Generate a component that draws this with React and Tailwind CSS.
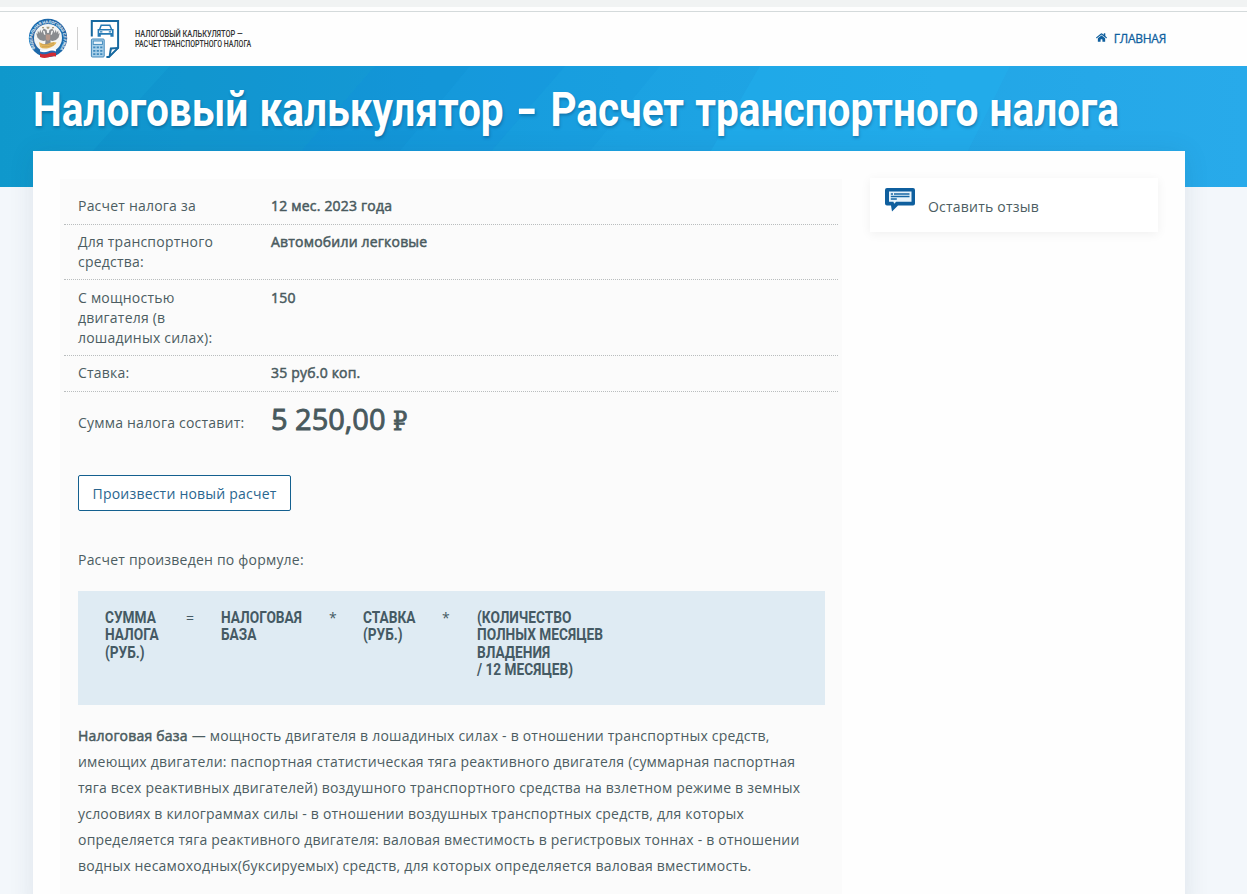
import { FaHome } from 'react-icons/fa';

const rows = [
  { label: ['Расчет налога за'], value: '12 мес. 2023 года', box: 'h-[46px] pt-[17px]' },
  { label: ['Для транспортного', 'средства:'], value: 'Автомобили легковые', box: 'h-[55px] pt-[7px]' },
  { label: ['С мощностью', 'двигателя (в', 'лошадиных силах):'], value: '150', box: 'h-[76px] pt-[8px]' },
  { label: ['Ставка:'], value: '35 руб.0 коп.', box: 'h-[36px] pt-[7px]' },
];

const formula = [
  { lines: ['СУММА', 'НАЛОГА', '(РУБ.)'], box: 'w-[81px]' },
  { sign: '=', box: 'w-[35px]' },
  { lines: ['НАЛОГОВАЯ', 'БАЗА'], box: 'w-[108px]' },
  { sign: '*', box: 'w-[34px]' },
  { lines: ['СТАВКА', '(РУБ.)'], box: 'w-[79px]' },
  { sign: '*', box: 'w-[35px]' },
  { lines: ['(КОЛИЧЕСТВО', 'ПОЛНЫХ МЕСЯЦЕВ', 'ВЛАДЕНИЯ', '/ 12 МЕСЯЦЕВ)'], box: 'w-[140px]' },
];

const about = [
  'имеющих двигатели: паспортная статистическая тяга реактивного двигателя (суммарная паспортная',
  'тяга всех реактивных двигателей) воздушного транспортного средства на взлетном режиме в земных',
  'услоовиях в килограммах силы - в отношении воздушных транспортных средств, для которых',
  'определяется тяга реактивного двигателя: валовая вместимость в регистровых тоннах - в отношении',
  'водных несамоходных(буксируемых) средств, для которых определяется валовая вместимость.',
];

function Emblem() {
  return (
    <svg className="h-10 w-10" viewBox="0 0 40 40">
      <defs>
        <path id="ring" d="M7.6 30.4 A15.6 15.6 0 1 1 32.4 30.4" />
      </defs>
      <circle cx="20" cy="20" r="19.2" fill="#1d68a9" />
      <circle cx="20" cy="20" r="14" fill="#f4f4f2" />
      <text fill="#e6eff7" fontSize="4.1" fontWeight="700" fontFamily="Roboto, sans-serif">
        <textPath href="#ring" textLength="70">ФЕДЕРАЛЬНАЯ НАЛОГОВАЯ СЛУЖБА</textPath>
      </text>
      {/* eagle */}
      <path
        d="M18.6 12 L15.6 10.4 L14.6 12.4 L16.6 13 L17.4 17 L16 16.4 L14.6 11.8 L13.4 15 L12.2 11.6 L11.4 15 L9.8 12.6 L9.6 16 L8.2 15 L9.4 19.6 L12 22 L15.4 23 L17.6 22.4 L17 27 L20 30 L23 27 L22.4 22.4 L24.6 23 L28 22 L30.6 19.6 L31.8 15 L30.4 16 L30.2 12.6 L28.6 15 L27.8 11.6 L26.6 15 L25.4 11.8 L24 16.4 L22.6 17 L23.4 13 L25.4 12.4 L24.4 10.4 L21.4 12 L20.8 15 L19.2 15 Z"
        fill="#898c8f"
      />
      <path d="M18.4 8.8 h3.2 l-.6 2 h-2 Z M14 9 h2 v1.2 h-2 Z M24 9 h2 v1.2 h-2 Z" fill="#a79b80" />
      <path d="M17.8 16.6 h4.4 v4.6 l-2.2 1.8 l-2.2 -1.8 Z" fill="#b5988a" />
      <path d="M11 24 q5 3.4 9.6 1.6 q4 -2.4 8 -1 q-2 4 -7.6 5.4 q-6 1.4 -9 -1 Z" fill="#e3b65a" />
      <path d="M13 26 q5 2 13 -1 M14 28.8 q6 .8 12 -2" stroke="#c39a52" strokeWidth=".7" fill="none" />
      <path d="M12 31.4 q4 1.6 8 .2 t8 -.2 v2.6 q-4 -1.6 -8 0 t-8 .2 Z" fill="#fff" />
      <path d="M12 33.4 q4 1.6 8 0 t8 0 v2.2 q-4 -1.4 -8 .2 t-8 0 Z" fill="#2769b3" />
      <path d="M12 35.4 q4 1.8 8.4 0 t7.6 -.4 v3.6 q-3.6 -1 -7.6 .6 t-8.4 -.2 Z" fill="#cf2b35" />
    </svg>
  );
}

function CarCalcIcon() {
  return (
    <svg className="h-[40px] w-[30px]" viewBox="0 0 30 40" fill="none">
      <path d="M1.8 17.6 V1.9 H28.1 V28.5 L19 38.1 H16.4" stroke="#16689f" strokeWidth="2" />
      <path d="M18.4 39 L20 28.6 L29 28 L28.8 29.6 Z" fill="#16689f" />
      <path d="M20.8 34.8 L21.9 30.6 L25.6 30 Z" fill="#fff" />
      <path d="M9.6 10.5 L11.2 6.3 H19.8 L21.6 10.5" stroke="#2579b4" strokeWidth="1.5" />
      <path fillRule="evenodd" d="M7.6 10 h16 v7.8 h-3.2 v-2 H10.8 v2 H7.6 Z M9.2 11.6 v2.5 h12.8 v-2.5 Z" fill="#2579b4" />
      <path d="M10 12.9 h2.4 M18.8 12.9 h2.4" stroke="#2579b4" strokeWidth="1.3" />
      <rect x="1.4" y="20" width="12.8" height="18" rx="1" fill="#a9d0e9" stroke="#4289bb" strokeWidth="1" />
      <rect x="3.2" y="22" width="9.2" height="3.4" fill="#e9f5fc" stroke="#3b86ba" strokeWidth=".9" />
      <path
        d="M3.2 28.4 h2.2 M6.7 28.4 h2.2 M10.2 28.4 h2.2 M3.2 31.8 h2.2 M6.7 31.8 h2.2 M10.2 31.8 h2.2 M3.2 35.2 h2.2 M6.7 35.2 h2.2 M10.2 35.2 h2.2"
        stroke="#3f88bb"
        strokeWidth="1.8"
      />
    </svg>
  );
}

function FeedbackIcon() {
  return (
    <svg className="h-6 w-[30px]" viewBox="0 0 30 24">
      <path d="M2 0 H28 Q30 0 30 2 V15.5 Q30 17.5 28 17.5 H13 L7 23.5 L6 17.5 H2 Q0 17.5 0 15.5 V2 Q0 0 2 0 Z" fill="#0f5f9e" />
      <path d="M4 3.6 H26.5 V13.8 H11.2 L9.2 15.8 L8.4 13.8 H4 Z" fill="#e9f4fb" />
      <path d="M5.8 6 H8 M9 6 H24.5 M5.8 8.5 H24.5 M5.8 11 H11.8" stroke="#1767a5" strokeWidth="1.5" />
    </svg>
  );
}

function Header() {
  return (
    <header className="h-[66px] bg-[#fefefe]">
      <div className="h-[7px] bg-[#f1f3f3]" />
      <div className="h-[5px] border-b border-[#d4dadb]" />
      <div className="flex h-[54px] items-start pl-[28px]">
        <div className="pt-[6px]"><Emblem /></div>
        <div className="mt-[15px] ml-[9px] h-[23px] w-px bg-[#cfcfcf]" />
        <div className="mt-[7px] ml-[12px]"><CarCalcIcon /></div>
        <div className="mt-[18px] ml-[15px] w-[118px] font-[Roboto,sans-serif] text-[9px] leading-[9.5px] font-medium whitespace-nowrap text-[#333]">
          <p className="w-max origin-left scale-x-[0.82]">НАЛОГОВЫЙ КАЛЬКУЛЯТОР —</p>
          <p className="w-max origin-left scale-x-[0.78]">РАСЧЕТ ТРАНСПОРТНОГО НАЛОГА</p>
        </div>
        <a href="#" className="mt-[17px] mr-[81px] ml-auto flex items-center text-[12px] leading-5 tracking-[-0.25px] text-[#0f5f9e] [-webkit-text-stroke:0.3px_#0f5f9e]">
          <FaHome className="mr-[7px] mb-[3px] size-[11px]" />
          ГЛАВНАЯ
        </a>
      </div>
    </header>
  );
}

function Hero() {
  return (
    <section className="relative h-[121px] overflow-hidden bg-linear-to-r from-[#0f98cc] via-[#1ba2e2] to-[#28aaea]">
      <svg className="absolute inset-0 h-full w-full" viewBox="0 0 1247 121" preserveAspectRatio="none">
        <path d="M170 0 H375 L270 121 H60 Z" fill="#0b80c4" fillOpacity=".2" />
        <path d="M375 0 H470 L370 121 H270 Z" fill="#0b80d0" fillOpacity=".3" />
        <path d="M470 0 H565 L460 121 H370 Z" fill="#0c86d8" fillOpacity=".24" />
        <path d="M565 0 H660 L560 121 H460 Z" fill="#1090dc" fillOpacity=".16" />
        <path d="M760 0 H1010 L950 121 H690 Z" fill="#22b4f0" fillOpacity=".35" />
      </svg>
      <h1 className="relative ml-[33px] w-max origin-left scale-x-[0.828] pt-[15px] font-[Roboto,sans-serif] text-[49px] leading-[58px] font-bold [word-spacing:1.4px] whitespace-nowrap text-white [text-shadow:1px_2px_3px_rgba(0,50,90,0.35)]">
        Налоговый калькулятор <span className="mx-[5px] inline-block scale-x-[1.4]">-</span> Расчет транспортного налога
      </h1>
    </section>
  );
}

export default function App() {
  return (
    <div className="h-[894px] w-full overflow-hidden bg-[#f3f7fb] font-['Open_Sans',sans-serif] text-[14px] text-[#4c5d62]">
      <Header />
      <Hero />
      <main className="relative -mt-[36px] ml-[33px] flex h-[760px] w-[1152px] items-start bg-[#fefefe] pl-[27px] shadow-[0_2px_24px_rgba(30,60,90,0.1)]">
        <section className="mt-[28px] h-[732px] w-[782px] bg-[#fbfbfb]">
          <dl className="mx-[4px] leading-5">
            {rows.map((row) => (
              <div key={row.value} className={`flex border-b border-dotted border-[#b9bdbe] pl-[14px] ${row.box}`}>
                <dt className="w-[193px] tracking-[0.21px] whitespace-nowrap">
                  {row.label.map((line) => (
                    <p key={line}>{line}</p>
                  ))}
                </dt>
                <dd className="tracking-[0.2px] [-webkit-text-stroke:0.5px_#48595d]">{row.value}</dd>
              </div>
            ))}
            <div className="flex h-[83px] items-start pl-[14px]">
              <dt className="w-[193px] pt-[21px] tracking-[0.21px]">Сумма налога составит:</dt>
              <dd className="h-[50px] pt-[7px] text-[29px] leading-10 whitespace-nowrap text-[#48595d] [-webkit-text-stroke:0.9px_#48595d]">
                5 250,00 <span className="inline-block origin-left scale-x-[0.86] font-['DejaVu_Serif',serif] text-[26px] leading-none">₽</span>
              </dd>
            </div>
          </dl>
          <div className="px-[18px]">
            <button className="block h-[36px] w-[213px] rounded-[2px] border border-[#14608f] bg-white text-[14px] tracking-[0.21px] whitespace-nowrap text-[#2a668f]">
              Произвести новый расчет
            </button>
            <p className="mt-[39px] leading-5 tracking-[0.21px]">Расчет произведен по формуле:</p>
            <div className="mt-[21px] flex h-[114px] w-[747px] bg-[#dfebf3] pt-[18px] pl-[27px] font-[Roboto,sans-serif] text-[16.5px] leading-[17.4px] font-bold text-[#455a64]">
              {formula.map((part, i) => (
                <div key={i} className={`shrink-0 ${part.box}`}>
                  {part.sign ? (
                    <span className="font-['Open_Sans',sans-serif] text-[14px] font-normal">{part.sign}</span>
                  ) : (
                    part.lines.map((line) => (
                      <p key={line} className="w-max origin-left scale-x-[0.83] whitespace-nowrap">{line}</p>
                    ))
                  )}
                </div>
              ))}
            </div>
            <div className="mt-[18px] leading-[26px] tracking-[0.21px] whitespace-nowrap">
              <p>
                <b className="font-normal tracking-[0.21px] [-webkit-text-stroke:0.5px_#48595d]">Налоговая база</b> — мощность двигателя в лошадиных силах - в отношении транспортных средств,
              </p>
              {about.map((line) => (
                <p key={line}>{line}</p>
              ))}
            </div>
          </div>
        </section>
        <aside className="mt-[27px] ml-[28px] flex h-[54px] w-[288px] items-start bg-white pl-[15px] shadow-[0_2px_10px_rgba(0,0,0,0.06)]">
          <div className="pt-[10px]"><FeedbackIcon /></div>
          <a href="#" className="mt-[19px] ml-[13px] leading-5 tracking-[0.21px]">Оставить отзыв</a>
        </aside>
      </main>
    </div>
  );
}
